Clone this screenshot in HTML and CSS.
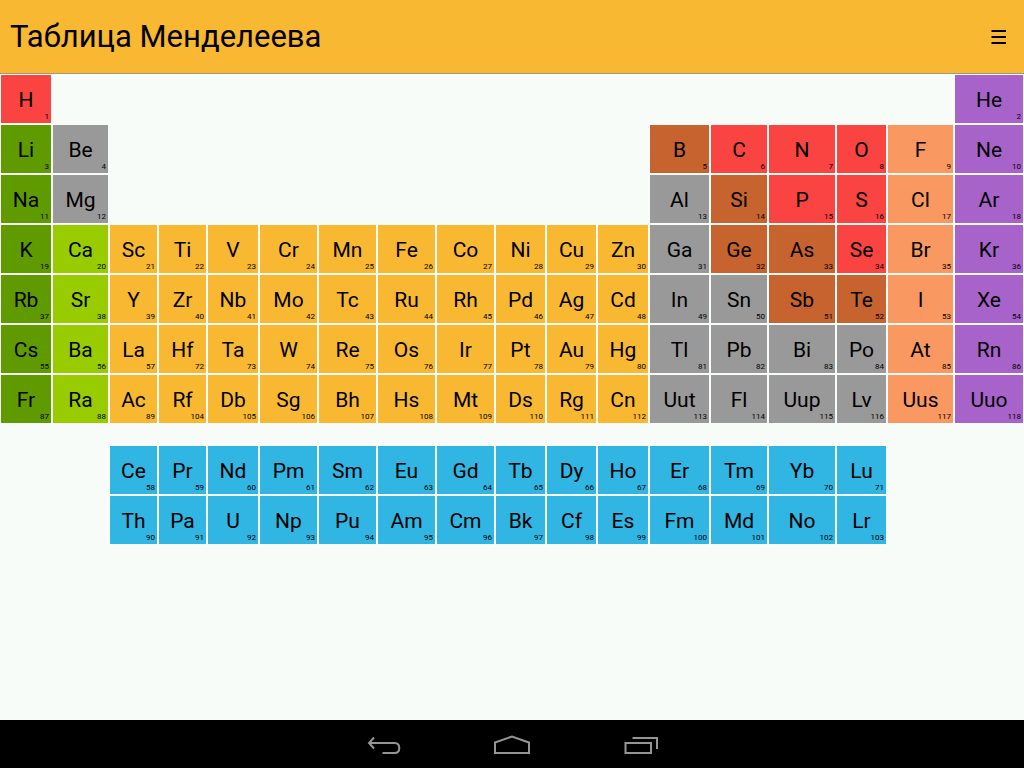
FILE: index.html
```html
<!DOCTYPE html>
<html lang="ru">
<head>
<meta charset="utf-8">
<meta name="viewport" content="width=device-width, initial-scale=1">
<title>Таблица Менделеева</title>
<link rel="stylesheet" href="styles.css">
</head>
<body>
<header class="app-bar">
  <h1 class="title">Таблица Менделеева</h1>
  <button class="menu-button" type="button" aria-label="Меню">
    <svg width="16" height="17" viewBox="0 0 16 17" aria-hidden="true"><path d="M1.500 3H16M1.500 9H16M1.500 15H16"/></svg>
  </button>
</header>
<main class="content">
  <table class="elements" aria-label="Таблица Менделеева">
    <tbody>
      <tr>
        <td class="nonmetal"><span>H</span><small>1</small></td>
        <td class="empty" colspan="16"></td>
        <td class="noble"><span>He</span><small>2</small></td>
      </tr>
      <tr>
        <td class="alkali"><span>Li</span><small>3</small></td>
        <td class="metal"><span>Be</span><small>4</small></td>
        <td class="empty" colspan="10"></td>
        <td class="metalloid"><span>B</span><small>5</small></td>
        <td class="nonmetal"><span>C</span><small>6</small></td>
        <td class="nonmetal"><span>N</span><small>7</small></td>
        <td class="nonmetal"><span>O</span><small>8</small></td>
        <td class="halogen"><span>F</span><small>9</small></td>
        <td class="noble"><span>Ne</span><small>10</small></td>
      </tr>
      <tr>
        <td class="alkali"><span>Na</span><small>11</small></td>
        <td class="metal"><span>Mg</span><small>12</small></td>
        <td class="empty" colspan="10"></td>
        <td class="metal"><span>Al</span><small>13</small></td>
        <td class="metalloid"><span>Si</span><small>14</small></td>
        <td class="nonmetal"><span>P</span><small>15</small></td>
        <td class="nonmetal"><span>S</span><small>16</small></td>
        <td class="halogen"><span>Cl</span><small>17</small></td>
        <td class="noble"><span>Ar</span><small>18</small></td>
      </tr>
      <tr>
        <td class="alkali"><span>K</span><small>19</small></td>
        <td class="alkaline"><span>Ca</span><small>20</small></td>
        <td class="transition"><span>Sc</span><small>21</small></td>
        <td class="transition"><span>Ti</span><small>22</small></td>
        <td class="transition"><span>V</span><small>23</small></td>
        <td class="transition"><span>Cr</span><small>24</small></td>
        <td class="transition"><span>Mn</span><small>25</small></td>
        <td class="transition"><span>Fe</span><small>26</small></td>
        <td class="transition"><span>Co</span><small>27</small></td>
        <td class="transition"><span>Ni</span><small>28</small></td>
        <td class="transition"><span>Cu</span><small>29</small></td>
        <td class="transition"><span>Zn</span><small>30</small></td>
        <td class="metal"><span>Ga</span><small>31</small></td>
        <td class="metalloid"><span>Ge</span><small>32</small></td>
        <td class="metalloid"><span>As</span><small>33</small></td>
        <td class="nonmetal"><span>Se</span><small>34</small></td>
        <td class="halogen"><span>Br</span><small>35</small></td>
        <td class="noble"><span>Kr</span><small>36</small></td>
      </tr>
      <tr>
        <td class="alkali"><span>Rb</span><small>37</small></td>
        <td class="alkaline"><span>Sr</span><small>38</small></td>
        <td class="transition"><span>Y</span><small>39</small></td>
        <td class="transition"><span>Zr</span><small>40</small></td>
        <td class="transition"><span>Nb</span><small>41</small></td>
        <td class="transition"><span>Mo</span><small>42</small></td>
        <td class="transition"><span>Tc</span><small>43</small></td>
        <td class="transition"><span>Ru</span><small>44</small></td>
        <td class="transition"><span>Rh</span><small>45</small></td>
        <td class="transition"><span>Pd</span><small>46</small></td>
        <td class="transition"><span>Ag</span><small>47</small></td>
        <td class="transition"><span>Cd</span><small>48</small></td>
        <td class="metal"><span>In</span><small>49</small></td>
        <td class="metal"><span>Sn</span><small>50</small></td>
        <td class="metalloid"><span>Sb</span><small>51</small></td>
        <td class="metalloid"><span>Te</span><small>52</small></td>
        <td class="halogen"><span>I</span><small>53</small></td>
        <td class="noble"><span>Xe</span><small>54</small></td>
      </tr>
      <tr>
        <td class="alkali"><span>Cs</span><small>55</small></td>
        <td class="alkaline"><span>Ba</span><small>56</small></td>
        <td class="transition"><span>La</span><small>57</small></td>
        <td class="transition"><span>Hf</span><small>72</small></td>
        <td class="transition"><span>Ta</span><small>73</small></td>
        <td class="transition"><span>W</span><small>74</small></td>
        <td class="transition"><span>Re</span><small>75</small></td>
        <td class="transition"><span>Os</span><small>76</small></td>
        <td class="transition"><span>Ir</span><small>77</small></td>
        <td class="transition"><span>Pt</span><small>78</small></td>
        <td class="transition"><span>Au</span><small>79</small></td>
        <td class="transition"><span>Hg</span><small>80</small></td>
        <td class="metal"><span>Tl</span><small>81</small></td>
        <td class="metal"><span>Pb</span><small>82</small></td>
        <td class="metal"><span>Bi</span><small>83</small></td>
        <td class="metal"><span>Po</span><small>84</small></td>
        <td class="halogen"><span>At</span><small>85</small></td>
        <td class="noble"><span>Rn</span><small>86</small></td>
      </tr>
      <tr>
        <td class="alkali"><span>Fr</span><small>87</small></td>
        <td class="alkaline"><span>Ra</span><small>88</small></td>
        <td class="transition"><span>Ac</span><small>89</small></td>
        <td class="transition"><span>Rf</span><small>104</small></td>
        <td class="transition"><span>Db</span><small>105</small></td>
        <td class="transition"><span>Sg</span><small>106</small></td>
        <td class="transition"><span>Bh</span><small>107</small></td>
        <td class="transition"><span>Hs</span><small>108</small></td>
        <td class="transition"><span>Mt</span><small>109</small></td>
        <td class="transition"><span>Ds</span><small>110</small></td>
        <td class="transition"><span>Rg</span><small>111</small></td>
        <td class="transition"><span>Cn</span><small>112</small></td>
        <td class="metal"><span>Uut</span><small>113</small></td>
        <td class="metal"><span>Fl</span><small>114</small></td>
        <td class="metal"><span>Uup</span><small>115</small></td>
        <td class="metal"><span>Lv</span><small>116</small></td>
        <td class="halogen"><span>Uus</span><small>117</small></td>
        <td class="noble"><span>Uuo</span><small>118</small></td>
      </tr>
    </tbody>
    <tbody>
      <tr>
        <td class="empty" colspan="2"></td>
        <td class="inner"><span>Ce</span><small>58</small></td>
        <td class="inner"><span>Pr</span><small>59</small></td>
        <td class="inner"><span>Nd</span><small>60</small></td>
        <td class="inner"><span>Pm</span><small>61</small></td>
        <td class="inner"><span>Sm</span><small>62</small></td>
        <td class="inner"><span>Eu</span><small>63</small></td>
        <td class="inner"><span>Gd</span><small>64</small></td>
        <td class="inner"><span>Tb</span><small>65</small></td>
        <td class="inner"><span>Dy</span><small>66</small></td>
        <td class="inner"><span>Ho</span><small>67</small></td>
        <td class="inner"><span>Er</span><small>68</small></td>
        <td class="inner"><span>Tm</span><small>69</small></td>
        <td class="inner"><span>Yb</span><small>70</small></td>
        <td class="inner"><span>Lu</span><small>71</small></td>
      </tr>
      <tr>
        <td class="empty" colspan="2"></td>
        <td class="inner"><span>Th</span><small>90</small></td>
        <td class="inner"><span>Pa</span><small>91</small></td>
        <td class="inner"><span>U</span><small>92</small></td>
        <td class="inner"><span>Np</span><small>93</small></td>
        <td class="inner"><span>Pu</span><small>94</small></td>
        <td class="inner"><span>Am</span><small>95</small></td>
        <td class="inner"><span>Cm</span><small>96</small></td>
        <td class="inner"><span>Bk</span><small>97</small></td>
        <td class="inner"><span>Cf</span><small>98</small></td>
        <td class="inner"><span>Es</span><small>99</small></td>
        <td class="inner"><span>Fm</span><small>100</small></td>
        <td class="inner"><span>Md</span><small>101</small></td>
        <td class="inner"><span>No</span><small>102</small></td>
        <td class="inner"><span>Lr</span><small>103</small></td>
      </tr>
    </tbody>
  </table>
</main>
<nav class="system-bar" aria-label="Навигация">
  <button type="button" aria-label="Назад">
    <svg width="40" height="24" viewBox="0 0 40 24" aria-hidden="true"><path d="M10 5.500L5 11L10 16.500M5.500 11H30.500C34 11 35.300 13.200 35.300 16C35.300 18.800 34 21 30.500 21H18.500"/></svg>
  </button>
  <button type="button" aria-label="Домой">
    <svg width="40" height="24" viewBox="0 0 40 24" aria-hidden="true"><path d="M3 21V10.500L20 4.500L37 10.500V21Z"/></svg>
  </button>
  <button type="button" aria-label="Недавние приложения">
    <svg width="40" height="24" viewBox="0 0 40 24" aria-hidden="true"><path d="M5.500 11H31V21H5.500ZM12.500 6H37V17"/></svg>
  </button>
</nav>
</body>
</html>
```
FILE: styles.css
```css
* {
  box-sizing: border-box;
}

body {
  margin: 0;
  min-height: 100vh;
  display: flex;
  flex-direction: column;
  background: #f7fcf9;
  color: #000;
  font-family: Roboto, "Noto Sans", sans-serif;
}

button {
  display: flex;
  align-items: center;
  justify-content: center;
  padding: 0;
  border: 0;
  background: none;
}

svg {
  fill: none;
  stroke: currentColor;
  stroke-width: 2;
}

.app-bar {
  display: flex;
  align-items: center;
  justify-content: space-between;
  height: 74px;
  padding: 0 10px;
  background: #f9b831;
  border-bottom: 1px solid #a09878;
}

.title {
  margin: 0;
  font-size: 31px;
  font-weight: 400;
  line-height: 40px;
}

.menu-button {
  width: 32px;
  height: 49px;
  color: #000;
}

.content {
  flex: 1;
  padding: 1px;
}

.elements {
  display: flex;
  flex-direction: column;
  gap: 23px;
}

.elements tbody {
  display: grid;
  gap: 2px;
}

.elements tr {
  display: grid;
  grid-template-columns: 50fr 55fr 47fr 47fr 50fr 57fr 57fr 57fr 57fr 49fr 49fr 50fr 59fr 56fr 66fr 49fr 65fr 68fr;
  grid-auto-rows: 48px;
  gap: 2px;
}

.elements td {
  display: grid;
  padding: 0;
}

.elements [colspan="2"] {
  grid-column: span 2;
}

.elements [colspan="10"] {
  grid-column: span 10;
}

.elements [colspan="16"] {
  grid-column: span 16;
}

.elements span {
  grid-area: 1 / 1;
  place-self: center;
  padding-top: 2px;
  font-size: 21px;
  line-height: 24px;
}

.elements small {
  grid-area: 1 / 1;
  place-self: end;
  padding: 0 2px 2px 0;
  font-size: 8px;
  line-height: 9px;
}

.nonmetal { background: #f94441; }
.alkali { background: #5f9a00; }
.alkaline { background: #99cc00; }
.metal { background: #999; }
.transition { background: #f9b831; }
.metalloid { background: #c7632f; }
.halogen { background: #f99861; }
.noble { background: #a763c9; }
.inner { background: #31b5e2; }

.system-bar {
  display: flex;
  align-items: center;
  justify-content: center;
  gap: 48px;
  height: 48px;
  background: #000;
  color: #959595;
}

.system-bar button {
  width: 80px;
  height: 48px;
  color: inherit;
}
```
